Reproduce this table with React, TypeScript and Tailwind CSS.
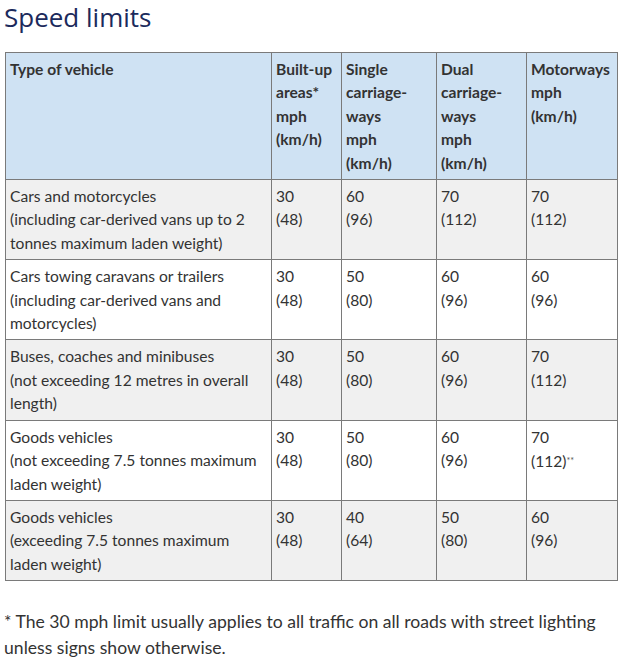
const rows: { type: string[]; v: [string, string][]; note?: boolean }[] = [
  {
    type: ["Cars and motorcycles", "(including car-derived vans up to 2 tonnes maximum laden weight)"],
    v: [["30", "(48)"], ["60", "(96)"], ["70", "(112)"], ["70", "(112)"]],
  },
  {
    type: ["Cars towing caravans or trailers", "(including car-derived vans and motorcycles)"],
    v: [["30", "(48)"], ["50", "(80)"], ["60", "(96)"], ["60", "(96)"]],
  },
  {
    type: ["Buses, coaches and minibuses", "(not exceeding 12 metres in overall length)"],
    v: [["30", "(48)"], ["50", "(80)"], ["60", "(96)"], ["70", "(112)"]],
  },
  {
    type: ["Goods vehicles", "(not exceeding 7.5 tonnes maximum laden weight)"],
    v: [["30", "(48)"], ["50", "(80)"], ["60", "(96)"], ["70", "(112)"]],
    note: true,
  },
  {
    type: ["Goods vehicles", "(exceeding 7.5 tonnes maximum laden weight)"],
    v: [["30", "(48)"], ["40", "(64)"], ["50", "(80)"], ["60", "(96)"]],
  },
];

const cell = "border border-[#7a7a7a] align-top pl-[4px] pr-[3px] pt-[5px] pb-[4px]";

export default function App() {
  return (
    <div className="w-[624px] h-[662px] bg-white text-[#333] font-['Lato','Liberation_Sans',sans-serif]">
      <h1 className="pl-[4px] text-[26px] leading-[34px] text-[#1b2a5c] font-['Open_Sans','Noto_Sans',sans-serif]">
        Speed limits
      </h1>
      <table className="ml-[5px] mt-[18px] border-collapse text-[15.6px] leading-[23.4px] table-fixed w-[612px]">
        <colgroup>
          <col className="w-[266px]" />
          <col className="w-[70px]" />
          <col className="w-[95px]" />
          <col className="w-[90px]" />
          <col className="w-[91px]" />
        </colgroup>
        <thead>
          <tr className="bg-[#cfe2f3] font-bold text-left">
            <th className={cell}>Type of vehicle</th>
            <th className={cell}>
              Built-up
              <br />
              areas*
              <br />
              mph
              <br />
              (km/h)
            </th>
            <th className={cell}>
              Single
              <br />
              carriage-
              <br />
              ways
              <br />
              mph
              <br />
              (km/h)
            </th>
            <th className={cell}>
              Dual
              <br />
              carriage-
              <br />
              ways
              <br />
              mph
              <br />
              (km/h)
            </th>
            <th className={cell}>
              Motorways
              <br />
              mph
              <br />
              (km/h)
            </th>
          </tr>
        </thead>
        <tbody>
          {rows.map((r, i) => (
            <tr key={i} className={i % 2 === 0 ? "bg-[#f0f0f0]" : "bg-white"}>
              <td className={cell}>
                {r.type[0]}
                <br />
                {r.type[1]}
              </td>
              {r.v.map((v, j) => (
                <td key={j} className={cell}>
                  {v[0]}
                  <br />
                  {v[1]}
                  {r.note && j === 3 && <span className="text-[9px] align-[3px] text-[#555]">**</span>}
                </td>
              ))}
            </tr>
          ))}
        </tbody>
      </table>
      <p className="mt-[28px] pl-[4px] text-[17.6px] leading-[26px] text-[#333]">
        * The 30 mph limit usually applies to all traffic on all roads with street lighting unless signs show otherwise.
      </p>
    </div>
  );
}
